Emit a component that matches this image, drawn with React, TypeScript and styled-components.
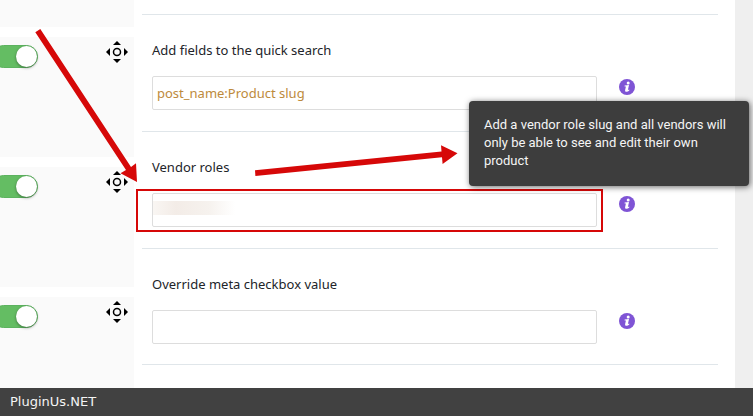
import React from 'react';
import styled, { createGlobalStyle } from 'styled-components';

const GlobalStyle = createGlobalStyle`
  *, *::before, *::after { box-sizing: border-box; }
  body {
    margin: 0;
    background: #efefef;
    font-family: 'Noto Sans', 'Open Sans', sans-serif;
    font-size: 13px;
    line-height: 18px;
    color: #222429;
  }
`;

const Page = styled.div`
  display: flex;
  flex-direction: column;
  height: 100vh;
  overflow: hidden;
`;

const Body = styled.div`
  position: relative;
  flex: 1;
  min-height: 0;
  display: flex;
  padding-right: 18px;
  overflow: hidden;
`;

const Sidebar = styled.aside`
  flex: 0 0 134px;
  display: grid;
  grid-template-rows: 27px;
  grid-auto-rows: 120px;
  gap: 10px;
  background: #ffffff;
`;

const OptionCard = styled.div`
  display: flex;
  align-items: flex-start;
  justify-content: space-between;
  padding: 4px 6px 0 0;
  overflow: hidden;
  background: #fafafa;
`;

const Toggle = styled.input`
  appearance: none;
  display: flex;
  justify-content: flex-end;
  width: 46px;
  height: 23px;
  margin: 4px 0 0 -8px;
  border: 1px solid #5cb35f;
  border-radius: 12px;
  background: #64bd63;
  cursor: pointer;

  &::before {
    content: '';
    width: 21px;
    height: 21px;
    border-radius: 50%;
    background: #ffffff;
    box-shadow: 0 1px 3px rgba(0, 0, 0, 0.4);
  }
  &:not(:checked) {
    justify-content: flex-start;
    background: #dddddd;
  }
`;

const IconButton = styled.button`
  display: flex;
  flex: none;
  padding: 0;
  border: 0;
  background: none;
  cursor: pointer;
`;

const Panel = styled.main`
  flex: 1;
  min-width: 0;
  padding: 14px 17px 0 8px;
  background: #ffffff;
`;

const FieldList = styled.div`
  display: grid;
  grid-template-rows: 117px 117px 116px;
  border-top: 1px solid #e0e6ea;
`;

const Field = styled.div`
  display: flex;
  flex-direction: column;
  gap: 17px;
  padding: 26px 83px 0 10px;
  border-bottom: 1px solid #e0e6ea;
`;

const FieldLabel = styled.label`
  align-self: flex-start;
`;

const FieldRow = styled.div`
  display: flex;
  align-items: flex-start;
  gap: 22px;

  ${IconButton} { margin-top: 3px; }
`;

const InputFrame = styled.div<{ $marked?: boolean }>`
  position: relative;
  flex: 1;
  display: flex;

  &::after {
    content: '';
    display: ${p => (p.$marked ? 'block' : 'none')};
    position: absolute;
    inset: -4px -6px -5px -16px;
    border: 2px solid #d60808;
    pointer-events: none;
  }
`;

const TextInput = styled.input<{ $obscured?: boolean }>`
  flex: 1;
  min-width: 0;
  height: 34px;
  padding: 0 4px;
  border: 1px solid #dddddd;
  border-radius: 2px;
  outline: 0;
  font: inherit;
  color: #bd8a3c;
  background: ${p =>
    p.$obscured
      ? 'linear-gradient(90deg, #f9f6f3, #f3ece7 28%, #f6f2ee 68%, #ffffff) 0 7px / 82px 14px no-repeat #ffffff'
      : '#ffffff'};
`;

const Tooltip = styled.div`
  position: absolute;
  top: 101px;
  right: 4px;
  width: 280px;
  min-height: 85px;
  padding: 15px;
  border-radius: 4px;
  background: #3d3d3d;
  color: #f5f5f5;
  font-family: Roboto, sans-serif;
  box-shadow: 1px 1px 6px rgba(0, 0, 0, 0.6);
`;

const Arrows = styled.svg`
  position: absolute;
  top: 0;
  left: 0;
  pointer-events: none;
`;

const Footer = styled.footer`
  flex: none;
  height: 28px;
  padding: 0 10px;
  background: #414141;
  color: #f4f4f4;
  font-family: 'DejaVu Sans', sans-serif;
  line-height: 28px;
`;

const MoveIcon = () => (
  <svg width="22" height="22" viewBox="0 0 22 22" aria-hidden="true">
    <path d="M11 0L15 4H7ZM11 22L7 18H15ZM0 11L4 7V15ZM22 11L18 7V15Z" fill="#000" />
    <circle cx="11" cy="11" r="3.5" fill="none" stroke="#000" strokeWidth="1.5" />
  </svg>
);

const InfoIcon = () => (
  <svg width="16" height="16" viewBox="0 0 16 16" aria-hidden="true">
    <circle cx="8" cy="8" r="8" fill="#7f54d5" />
    <circle cx="9.2" cy="3.9" r="1.5" fill="#fff" />
    <path d="M5.6 6.4L10 6L8.9 11L10.3 10.5V11.5C8.6 13.2 5.8 13.3 6.1 11.3L6.9 7.6H5.6Z" fill="#fff" />
  </svg>
);

const fields = [
  { id: 'quick-search', label: 'Add fields to the quick search', value: 'post_name:Product slug' },
  { id: 'vendor-roles', label: 'Vendor roles', value: '', marked: true },
  { id: 'meta-checkbox', label: 'Override meta checkbox value', value: '' },
];

export default function App() {
  return (
    <Page>
      <GlobalStyle />
      <Body>
        <Sidebar>
          <OptionCard />
          {[1, 2, 3].map(n => (
            <OptionCard key={n}>
              <Toggle type="checkbox" defaultChecked aria-label={`Enable column ${n}`} />
              <IconButton type="button" aria-label={`Move column ${n}`}>
                <MoveIcon />
              </IconButton>
            </OptionCard>
          ))}
        </Sidebar>
        <Panel>
          <FieldList>
            {fields.map(f => (
              <Field key={f.id}>
                <FieldLabel htmlFor={f.id}>{f.label}</FieldLabel>
                <FieldRow>
                  <InputFrame $marked={f.marked}>
                    <TextInput id={f.id} type="text" defaultValue={f.value} $obscured={f.marked} />
                  </InputFrame>
                  <IconButton type="button" aria-label={`About ${f.label}`}>
                    <InfoIcon />
                  </IconButton>
                </FieldRow>
              </Field>
            ))}
          </FieldList>
        </Panel>
        <Arrows width="460" height="200" viewBox="0 0 460 200" aria-hidden="true">
          <g fill="#d60808" stroke="none">
            <path d="M35.3 32.2L40.3 29L131 167L136 163.3L137 182L120.5 173.3L126 170Z" />
            <path d="M255 170.3L441.5 151.5L441 145.3L457.5 153.3L442.6 164L442 157.3L255.4 176Z" />
          </g>
        </Arrows>
        <Tooltip role="tooltip">
          Add a vendor role slug and all vendors will only be able to see and edit their own product
        </Tooltip>
      </Body>
      <Footer>PluginUs.NET</Footer>
    </Page>
  );
}
